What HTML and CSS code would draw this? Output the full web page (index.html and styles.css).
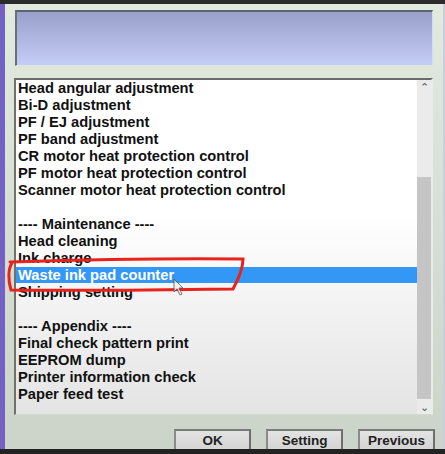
FILE: index.html
```html
<!DOCTYPE html>
<html lang="en">
<head>
    <meta charset="UTF-8">
    <meta name="viewport" content="width=device-width, initial-scale=1.0">
    <title>Adjustment Program</title>
    <link rel="stylesheet" href="styles.css">
</head>
<body>
    <div class="topbar"></div>
    <div class="window">
        <div class="edge"></div>
        <div class="panel">
            <div class="message-box"></div>

            <div class="list-box">
                <ul class="items">
                    <li>Head angular adjustment</li>
                    <li>Bi-D adjustment</li>
                    <li>PF / EJ adjustment</li>
                    <li>PF band adjustment</li>
                    <li>CR motor heat protection control</li>
                    <li>PF motor heat protection control</li>
                    <li>Scanner motor heat protection control</li>
                    <li>&nbsp;</li>
                    <li>---- Maintenance ----</li>
                    <li>Head cleaning</li>
                    <li>Ink charge</li>
                    <li class="selected">Waste ink pad counter</li>
                    <li>Shipping setting</li>
                    <li>&nbsp;</li>
                    <li>---- Appendix ----</li>
                    <li>Final check pattern print</li>
                    <li>EEPROM dump</li>
                    <li>Printer information check</li>
                    <li>Paper feed test</li>
                </ul>
                <div class="scrollbar">
                    <div class="arrow">&#8963;</div>
                    <div class="track">
                        <div class="thumb"></div>
                    </div>
                    <div class="arrow">&#8964;</div>
                </div>

                <!-- red marker drawn over the selected row -->
                <svg class="marker" width="245" height="40" viewBox="0 0 245 40">
                    <path d="M5 6 C70 4 160 2 238 3 C238 10 234 22 228 33 C160 34 80 35 6 34 C3 24 3 13 7 7"
                          fill="none" stroke="#e8231b" stroke-width="3" stroke-linecap="round"/>
                </svg>
                <svg class="cursor" width="12" height="18" viewBox="0 0 12 18">
                    <path d="M1 1 L1 14 L4 11 L7 17 L9 16 L6 10 L10 10 Z" fill="#f2f2f2" stroke="#555" stroke-width="1"/>
                </svg>
            </div>

            <div class="buttons">
                <button class="btn">OK</button>
                <button class="btn">Setting</button>
                <button class="btn">Previous</button>
            </div>
        </div>
    </div>
    <div class="bottombar"></div>
</body>
</html>
```

FILE: styles.css
```css
body {
    margin: 0;
    width: 445px;
    height: 454px;
    overflow: hidden;
    font-family: 'Liberation Sans', Arial, sans-serif;
    background: #1e1e1e;
}

.topbar {
    height: 4px;
    background: #2b2b2b;
}

.window {
    display: flex;
    height: 445px;
    overflow: hidden;
}

.edge {
    width: 5px;
    background: #7461c4;
}

.panel {
    flex: 1;
    display: flex;
    flex-direction: column;
    padding: 6px 0 0 9px;
    background: linear-gradient(#e1eadd, #ccd4c9);
    border-right: 2px solid #c7cfe0;
}

.panel > * {
    flex-shrink: 0;
}

.message-box {
    width: 415px;
    height: 53px;
    margin-left: 1px;
    border-top: 2px solid #5d6470;
    border-left: 2px solid #68707a;
    border-right: 1px solid #d8ddea;
    border-bottom: 1px solid #dfe6e0;
    background: linear-gradient(#99a1cb, #c4cdf6);
}

.list-box {
    position: relative;
    display: flex;
    width: 415px;
    height: 334px;
    margin-top: 12px;
    border-top: 2px solid #6b6b6b;
    border-left: 2px solid #707070;
    border-right: 2px solid #e9ede7;
    border-bottom: 1px solid #d4dad2;
    background: linear-gradient(#ffffff 40%, #e4e4e4);
}

.items {
    flex: 1;
    list-style: none;
    margin: 0;
    padding: 0;
    font-size: 14.7px;
    font-weight: bold;
    line-height: 17px;
    color: #111111;
}

.items li {
    padding-left: 2px;
    white-space: nowrap;
}

.items li.selected {
    background: #3397f5;
    color: #ffffff;
    height: 16px;
    line-height: 16px;
    margin-bottom: 1px;
}

.scrollbar {
    width: 14px;
    display: flex;
    flex-direction: column;
    background: #ebebeb;
}

.arrow {
    height: 14px;
    font-size: 11px;
    line-height: 14px;
    text-align: center;
    color: #555;
}

.track {
    flex: 1;
    display: flex;
    flex-direction: column;
    justify-content: flex-end;
    padding-bottom: 1px;
}

.thumb {
    height: 222px;
    background: #c5c5c5;
}

.marker {
    position: absolute;
    left: -11px;
    top: 176px;
}

.cursor {
    position: absolute;
    left: 157px;
    top: 198px;
    opacity: 0.8;
}

.buttons {
    display: flex;
    justify-content: flex-end;
    gap: 15px;
    margin-top: 14px;
    padding-right: 8px;
}

.btn {
    width: 77px;
    height: 26px;
    font-family: 'Liberation Sans', Arial, sans-serif;
    font-size: 13.5px;
    font-weight: bold;
    color: #222222;
    background: linear-gradient(#e3e3e3, #cfcfcf);
    border-top: 2px solid #7a7a7a;
    border-left: 2px solid #8a8a8a;
    border-right: 2px solid #6e6e6e;
    border-bottom: none;
    padding: 0 0 6px;
}

.bottombar {
    height: 5px;
    background: #222222;
}
```
